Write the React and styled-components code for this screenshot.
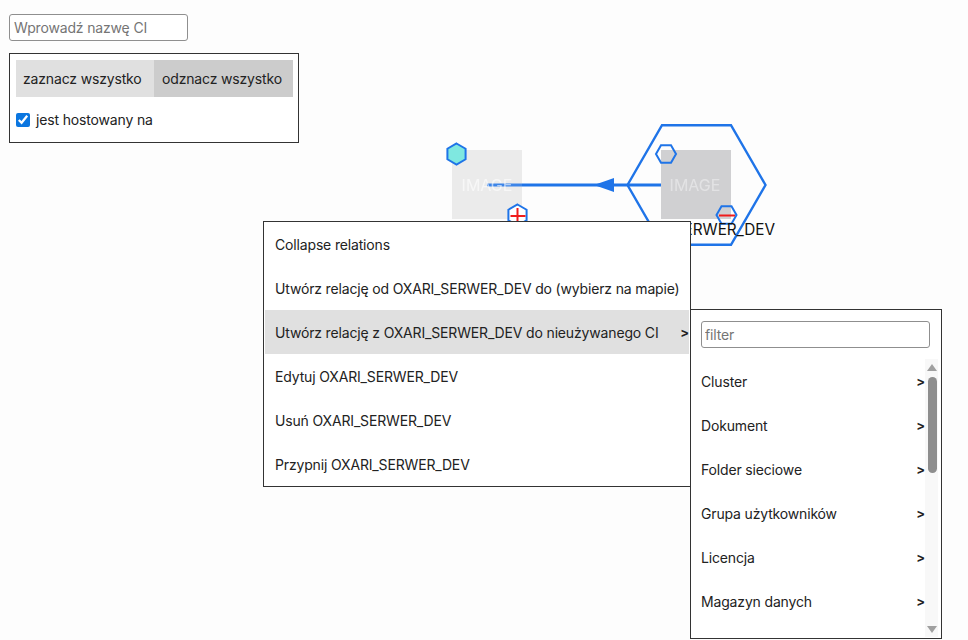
import React from "react"
import styled, { createGlobalStyle } from "styled-components"

const GlobalStyle = createGlobalStyle`
    html, body {
        margin: 0;
        padding: 0;
        height: 100%;
        background: #fdfdfd;
        font-family: Inter, "Liberation Sans", sans-serif;
        font-size: 14px;
        letter-spacing: -0.16px;
        color: #222;
    }
`

const Page = styled.div`
    position: relative;
    width: 968px;
    height: 640px;
    overflow: hidden;
`

const Toolbar = styled.div`
    position: relative;
    z-index: 1;
    display: flex;
    flex-direction: column;
    align-items: flex-start;
    gap: 12px;
    padding: 14px 0 0 9px;
`

const SearchInput = styled.input`
    box-sizing: border-box;
    width: 179px;
    height: 27px;
    padding: 0 4px;
    background: #fff;
    border: 1px solid #8f8f8f;
    border-radius: 3px;
    font: inherit;
    letter-spacing: inherit;
    color: #222;

    &::placeholder {
        color: #757575;
    }
`

const FilterPanel = styled.div`
    box-sizing: border-box;
    width: 290px;
    height: 90px;
    padding: 6px 5px 6px 6px;
    background: #fff;
    border: 1px solid #333;
`

const ButtonRow = styled.div`
    display: flex;
`

const SelectButton = styled.button`
    flex: none;
    height: 37px;
    padding: 0 7px;
    width: ${(props) => props.$width}px;
    background: ${(props) => props.$bg};
    border: 0;
    font: inherit;
    letter-spacing: inherit;
    text-align: left;
    color: #222;

    & + & {
        padding-left: 8px;
    }
`

const CheckRow = styled.label`
    display: flex;
    align-items: center;
    gap: 6px;
    margin-top: 14px;
`

const Check = styled.input`
    width: 14px;
    height: 14px;
    margin: 0;
    accent-color: #0b76e0;
`

const Diagram = styled.svg`
    position: absolute;
    left: 0;
    top: 0;
`

const ImageLabel = styled.text`
    font-family: Inter, "Liberation Sans", sans-serif;
    font-size: 16px;
    letter-spacing: 0;
    fill: #fff;
    opacity: ${(props) => props.$fade};
    filter: blur(0.7px);
    text-anchor: middle;
`

const NodeLabel = styled.text`
    font-family: Inter, "Liberation Sans", sans-serif;
    font-size: 15.3px;
    letter-spacing: 0;
    fill: #111;
    text-anchor: end;
`

const ContextMenu = styled.ul`
    position: absolute;
    left: 263px;
    top: 221px;
    box-sizing: border-box;
    width: 428px;
    height: 266px;
    margin: 0;
    padding: 0 1px 1px;
    list-style: none;
    background: #fff;
    border: 1px solid #333;
`

const MenuItem = styled.li`
    display: flex;
    align-items: center;
    justify-content: space-between;
    height: 44px;
    padding: 0 0 0 10px;
    white-space: nowrap;
    background: ${(props) => (props.$active ? "#e0e0e0" : "transparent")};
`

const Chevron = styled.span`
    font-size: 13px;
    font-weight: 700;
`

const SubMenu = styled.div`
    position: absolute;
    left: 690px;
    top: 309px;
    box-sizing: border-box;
    width: 252px;
    height: 330px;
    display: flex;
    flex-direction: column;
    background: #fff;
    border: 1px solid #333;
`

const FilterInput = styled.input`
    box-sizing: border-box;
    flex: none;
    width: 229px;
    height: 27px;
    margin: 11px 0 11px 10px;
    padding: 0 3px;
    background: #fff;
    border: 1px solid #8f8f8f;
    border-radius: 3px;
    font: inherit;
    letter-spacing: inherit;

    &::placeholder {
        color: #757575;
    }
`

const SubBody = styled.div`
    flex: 1;
    display: flex;
    min-height: 0;
`

const SubList = styled.ul`
    flex: 1;
    margin: 0;
    padding: 0 0 0 10px;
    list-style: none;
    overflow: hidden;
`

const SubItem = styled.li`
    display: flex;
    align-items: center;
    justify-content: space-between;
    height: 44px;
`

const ScrollTrack = styled.div`
    position: relative;
    flex: none;
    width: 13px;
    margin-right: 3px;
    margin-bottom: 1px;
    background: #f8f8f8;
`

const ScrollThumb = styled.div`
    position: absolute;
    left: 3px;
    top: 18px;
    width: 9px;
    height: 96px;
    border-radius: 5px;
    background: #8e8e8e;
`

const ScrollArrow = styled.div`
    position: absolute;
    left: 2px;
    ${(props) => (props.$down ? "bottom: 4px;" : "top: 5px;")}
    width: 0;
    height: 0;
    border-left: 5.5px solid transparent;
    border-right: 5.5px solid transparent;
    ${(props) => (props.$down ? "border-top" : "border-bottom")}: 7px solid #a0a0a0;
`

const hexPoints = (cx, cy, r) => {
    const h = r * 0.866
    return [
        [cx - r, cy],
        [cx - r / 2, cy - h],
        [cx + r / 2, cy - h],
        [cx + r, cy],
        [cx + r / 2, cy + h],
        [cx - r / 2, cy + h],
    ].join(" ")
}

// pointy-top variant, used for the badges on the left node
const hexPointsUp = (cx, cy, r) => {
    const h = r * 0.866
    return [
        [cx, cy - r],
        [cx + h, cy - r / 2],
        [cx + h, cy + r / 2],
        [cx, cy + r],
        [cx - h, cy + r / 2],
        [cx - h, cy - r / 2],
    ].join(" ")
}

const menuItems = [
    "Collapse relations",
    "Utwórz relację od OXARI_SERWER_DEV do (wybierz na mapie)",
    "Utwórz relację z OXARI_SERWER_DEV do nieużywanego CI",
    "Edytuj OXARI_SERWER_DEV",
    "Usuń OXARI_SERWER_DEV",
    "Przypnij OXARI_SERWER_DEV",
]

const ciTypes = ["Cluster", "Dokument", "Folder sieciowe", "Grupa użytkowników", "Licencja", "Magazyn danych"]

const App = () => (
    <Page>
        <GlobalStyle />
        <Diagram width="968" height="640" viewBox="0 0 968 640">
            <rect x="452" y="150" width="70" height="69" fill="#ececec" />
            <polygon points={hexPoints(696.5, 185, 69)} fill="none" stroke="#1f74e8" strokeWidth="2.4" />
            <line x1="487" y1="185" x2="661" y2="185" stroke="#1f74e8" strokeWidth="3" />
            <rect x="452" y="150" width="70" height="69" fill="#ececec" opacity="0.15" />
            <ImageLabel $fade={0.6} x="487" y="191">IMAGE</ImageLabel>
            <rect x="661" y="150" width="70" height="69" fill="#d0d0d2" />
            <ImageLabel $fade={0.4} x="695" y="191">IMAGE</ImageLabel>
            <polygon points="594,185 614,178 614,192" fill="#1f74e8" />
            <polygon points={hexPointsUp(456.5, 154, 10.5)} fill="#7fe8e0" stroke="#1f74e8" strokeWidth="2" />
            <polygon points={hexPointsUp(517.5, 215, 10.5)} fill="#fff" stroke="#1f74e8" strokeWidth="2" />
            <path d="M517.5 208v16M510.5 216h15" stroke="#f01c1c" strokeWidth="2" />
            <polygon points={hexPoints(666, 154, 10)} fill="none" stroke="#1f74e8" strokeWidth="2" />
            <polygon points={hexPoints(726.5, 215, 10)} fill="none" stroke="#1f74e8" strokeWidth="2" />
            <path d="M719 215.5h16" stroke="#f01c1c" strokeWidth="2" />
            <NodeLabel x="775" y="235">OXARI_SERWER_DEV</NodeLabel>
        </Diagram>
        <Toolbar>
            <SearchInput placeholder="Wprowadź nazwę CI" />
            <FilterPanel>
                <ButtonRow>
                    <SelectButton $width={138} $bg="#e0e0e0">zaznacz wszystko</SelectButton>
                    <SelectButton $width={139} $bg="#cccccc">odznacz wszystko</SelectButton>
                </ButtonRow>
                <CheckRow>
                    <Check type="checkbox" defaultChecked />
                    jest hostowany na
                </CheckRow>
            </FilterPanel>
        </Toolbar>
        <ContextMenu>
            {menuItems.map((item, i) => (
                <MenuItem key={item} $active={i === 2}>
                    {item}
                    {i === 2 && <Chevron>&gt;</Chevron>}
                </MenuItem>
            ))}
        </ContextMenu>
        <SubMenu>
            <FilterInput placeholder="filter" />
            <SubBody>
                <SubList>
                    {ciTypes.map((type) => (
                        <SubItem key={type}>
                            {type}
                            <Chevron>&gt;</Chevron>
                        </SubItem>
                    ))}
                </SubList>
                <ScrollTrack>
                    <ScrollArrow />
                    <ScrollThumb />
                    <ScrollArrow $down />
                </ScrollTrack>
            </SubBody>
        </SubMenu>
    </Page>
)

export default App
